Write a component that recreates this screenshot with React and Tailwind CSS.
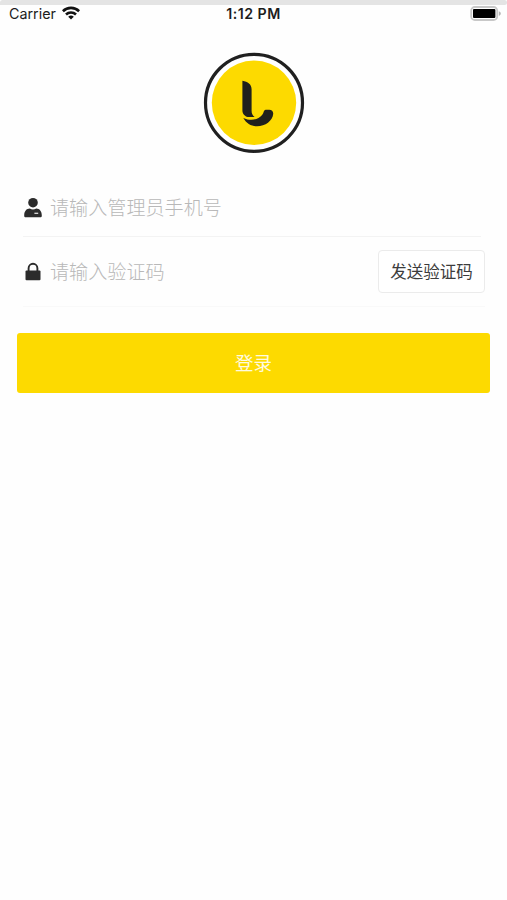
import { useState } from "react";

function Wifi() {
  return (
    <svg viewBox="0 0 18 14" className="w-[18px] h-3.5 shrink-0 -mt-0.5">
      <g fill="none" stroke="#111" strokeWidth="2.6">
        <path d="M0.9 5.2a11.6 11.6 0 0 1 16.2 0" />
        <path d="M4 8.5a7.2 7.2 0 0 1 10 0" />
      </g>
      <path d="M6.2 10.7a4.2 4.2 0 0 1 5.6 0L9 13.6z" fill="#111" />
    </svg>
  );
}

function Battery() {
  return (
    <svg viewBox="0 0 32 16" className="w-8 h-4">
      <rect x="1.2" y="1" width="26" height="13" rx="3.6" fill="#fff" stroke="#c8c8c8" strokeWidth="1.8" />
      <rect x="3" y="2.9" width="22.4" height="9.2" rx="1" fill="#000" />
      <path d="M28.8 5.2c1.4.4 2 1.3 2 2.3s-.6 1.9-2 2.3z" fill="#b5b5b5" />
    </svg>
  );
}

function StatusBar() {
  return (
    <div className="grid grid-cols-3 items-center h-[17px] text-sm leading-4 text-[#1c1c1c] font-['Inter','Liberation_Sans',sans-serif]">
      <div className="flex items-center gap-1.5 pl-[9px]">
        <span className="text-[14.3px]">Carrier</span>
        <Wifi />
      </div>
      <div className="text-center text-[14.2px] tracking-[0.5px] font-semibold whitespace-nowrap">1:12 PM</div>
      <div className="flex justify-end pr-[5px]">
        <Battery />
      </div>
    </div>
  );
}

function Logo() {
  return (
    <svg viewBox="0 0 102 102" className="w-[102px] h-[102px]">
      <circle cx="51" cy="50.8" r="48.5" fill="#fff" stroke="#202020" strokeWidth="3.2" />
      <circle cx="51" cy="50.8" r="42.2" fill="#fdda00" />
      <path d="M39.4 28.7c5.4.9 9.2 3.4 9.2 8.6v21.5c0 2.8.9 4.6 3 6.2h-5.8c-1.7 0-2.8-.5-4-1.6-1.6-1.5-2.4-2.8-2.4-5z" fill="#20201c" />
      <path d="M40.3 65.9c5.6 2.6 11 2.4 15.2 0 3.2-1.9 4.6-4 5.2-6.2.4-1.4 1.4-2 2.8-2h2.7c2.6 0 4.2 1.7 4 4.2-.6 6.6-7.8 12.3-16.2 12.3-5.6 0-10.6-2.8-13.7-8.3z" fill="#20201c" />
    </svg>
  );
}

function UserIcon() {
  return (
    <svg viewBox="0 0 20 22" className="w-5 h-[22px]">
      <circle cx="10" cy="5.7" r="4.8" fill="#2b2b2b" />
      <path d="M1.2 18.4c0-4 2.2-6.8 5.6-6.8 1 .6 2 .8 3.2.8s2.2-.2 3.2-.8c3.4 0 5.6 2.8 5.6 6.8 0 1.4-.5 1.9-1.8 1.9H3c-1.3 0-1.8-.5-1.8-1.9z" fill="#2b2b2b" />
      <path d="M11.4 16.3h3.8" stroke="#ddd" strokeWidth="1.3" />
    </svg>
  );
}

function LockIcon() {
  return (
    <svg viewBox="0 0 20 22" className="w-5 h-[22px]">
      <path d="M5.6 10.5V7.2a4.4 4.4 0 0 1 8.8 0v3.3" fill="none" stroke="#2b2b2b" strokeWidth="1.9" />
      <rect x="2.5" y="9.5" width="15" height="9.8" rx="1" fill="#2b2b2b" />
    </svg>
  );
}

const inputClass =
  "min-w-0 flex-1 h-8 -mt-0.5 bg-transparent text-[19.1px] font-light text-[#333] placeholder:text-[#b8b8b8] placeholder:opacity-100 focus:outline-none";

export default function App() {
  const [phone, setPhone] = useState("");
  const [code, setCode] = useState("");

  return (
    <div className="w-full h-screen overflow-hidden bg-[#fefefe] font-['Noto_Sans_CJK_SC',sans-serif]">
      <div className="h-[5px] bg-[#e4e4e4] rounded-tl-lg rounded-r-lg" />
      <StatusBar />

      {/* Logo */}
      <div className="flex justify-center mt-[30px]">
        <Logo />
      </div>

      <form onSubmit={(e) => e.preventDefault()}>
        {/* Phone */}
        <div className="flex items-center ml-[23px] mr-[26px] mt-[25px] h-[58px] gap-[7px] border-b border-[#f3f3f3]">
          <UserIcon />
          <input
            type="tel"
            value={phone}
            onChange={(e) => setPhone(e.target.value)}
            placeholder="请输入管理员手机号"
            className={inputClass}
          />
        </div>

        {/* Code */}
        <div className="flex items-center ml-[23px] mr-[22px] h-[70px] gap-[7px] border-b border-[#f9f9f9]">
          <LockIcon />
          <input
            type="text"
            value={code}
            onChange={(e) => setCode(e.target.value)}
            placeholder="请输入验证码"
            className={inputClass}
          />
          <button
            type="button"
            className="w-[107px] h-[43px] shrink-0 border border-[#ebebeb] rounded-sm bg-white text-[16.5px] text-[#3c3c3c]"
          >
            发送验证码
          </button>
        </div>

        <button
          type="submit"
          className="block w-[473px] h-[60px] mx-auto mt-[26px] rounded-[3px] bg-[#fdda00] text-[18.5px] text-[#fffbe0]"
        >
          登录
        </button>
      </form>
    </div>
  );
}
